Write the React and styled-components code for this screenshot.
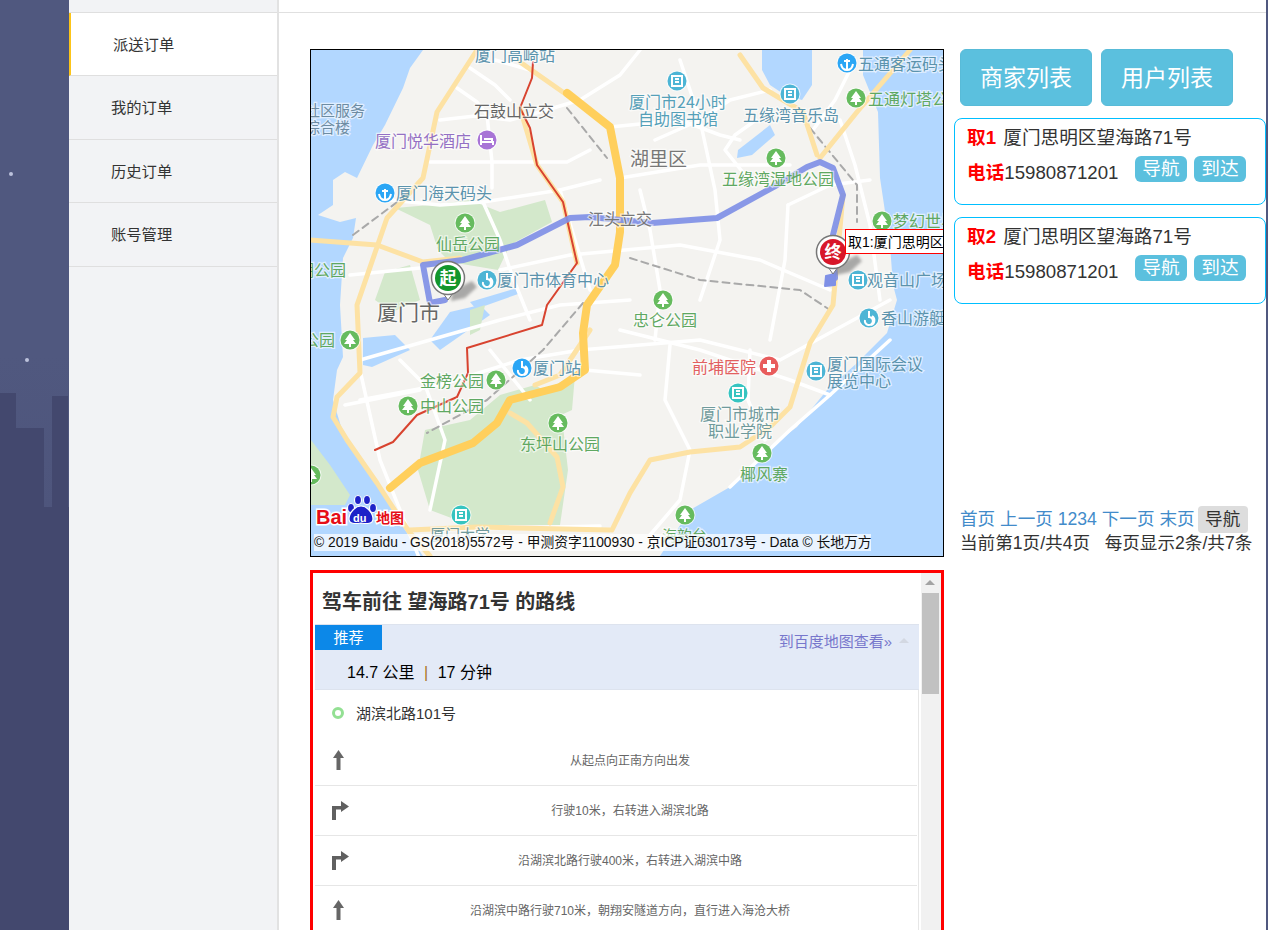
import React from "react"
import styled, { createGlobalStyle } from "styled-components"

const GlobalStyle = createGlobalStyle`
  html, body {
    margin: 0;
    padding: 0;
    height: 930px;
    overflow: hidden;
    background: #fff;
    font-family: "Liberation Sans", "Noto Sans CJK SC", sans-serif;
    color: #333;
  }
  * { box-sizing: border-box; }
`

const Page = styled.div`
  display: flex;
  width: 1268px;
  height: 930px;
  overflow: hidden;
`
const NightColumn = styled.div`
  width: 69px;
  flex: none;
  background: linear-gradient(#50587f 0%, #50587f 38%, #4e557c 55%, #414669 100%);
  & svg { display: block; }
`
const SideNav = styled.nav`
  width: 210px;
  flex: none;
  padding-top: 11.5px;
  background: #f2f3f5;
  border-right: 2px solid #e2e2e2;
`
const NavList = styled.div`
  border-top: 1px solid #dfdfdf;
`
const NavItem = styled.div`
  display: flex;
  align-items: center;
  height: 63.5px;
  font-size: 15.3px;
  color: #333;
  padding: 0 0 2px 42px;
  border-bottom: 1px solid #dfdfdf;
  background: ${p => (p.$active ? "#fff" : "transparent")};
  border-left: ${p => (p.$active ? "2px solid #fcc419" : "0")};
`
const Main = styled.main`
  flex: 1;
  min-width: 0;
  border-right: 2px solid #50587f;
  background: #fff;
`
const TopStrip = styled.div`
  height: 13px;
  border-bottom: 1px solid #e0e0e0;
`
const Content = styled.div`
  display: flex;
  padding: 36px 0 0 31px;
`
const LeftColumn = styled.div`
  width: 634px;
  flex: none;
`
const MapFrame = styled.div`
  width: 634px;
  height: 508px;
  border: 1px solid #000;
  & svg { display: block; }
`
const RoutePanel = styled.section`
  position: relative;
  margin-top: 13px;
  height: 380px;
  border: 3px solid #f00;
  overflow: hidden;
  padding: 0 22px 0 2px;
`
const ScrollTrack = styled.div`
  position: absolute;
  top: 0;
  right: 0;
  bottom: 0;
  width: 21px;
  background: #f1f1f1;
  border-left: 1px solid #fff;
`
const ScrollThumb = styled.div`
  position: absolute;
  top: 20px;
  left: 1px;
  width: 17px;
  height: 101px;
  background: #c1c1c1;
`
const ScrollArrow = styled.div`
  position: absolute;
  top: 7px;
  left: 4px;
  width: 0;
  height: 0;
  border-left: 5px solid transparent;
  border-right: 5px solid transparent;
  border-bottom: 5px solid #a3a3a3;
`
const RouteTitle = styled.h2`
  margin: 0;
  height: 51px;
  padding: 17px 0 0 7px;
  font-size: 20px;
  line-height: 24px;
  font-weight: bold;
  color: #333;
`
const PlanBox = styled.div`
  position: relative;
  height: 66px;
  background: #e3eaf7;
  border-top: 1px solid #dde3ee;
  border-bottom: 1px solid #dde3ee;
`
const PlanHead = styled.div`
  display: flex;
  justify-content: space-between;
  align-items: center;
  height: 25px;
  padding-right: 10px;
`
const PlanTag = styled.span`
  width: 67px;
  height: 25px;
  line-height: 25px;
  text-align: center;
  font-size: 15px;
  color: #fff;
  background: #0c88e8;
`
const MapLink = styled.span`
  display: flex;
  align-items: center;
  gap: 7px;
  margin-top: 6px;
  font-size: 15px;
  color: #7777cc;
`
const LinkCaret = styled.i`
  width: 0;
  height: 0;
  border-left: 5px solid transparent;
  border-right: 5px solid transparent;
  border-bottom: 5px solid #d3d8e2;
`
const PlanStats = styled.div`
  padding: 13px 0 0 32px;
  font-size: 16px;
  line-height: 20px;
  color: #000;
  & b {
    font-weight: normal;
    color: #a8741a;
    margin: 0 5px;
  }
`
const StepList = styled.div`
  border-right: 1px solid #e6e6e6;
`
const StartRow = styled.div`
  display: flex;
  align-items: center;
  height: 46px;
  padding: 0 0 1px 17px;
  font-size: 15px;
  color: #333;
`
const StartDot = styled.i`
  width: 12px;
  height: 12px;
  margin-right: 12px;
  border: 3px solid #93e093;
  border-radius: 50%;
`
const StepRow = styled.div`
  display: grid;
  grid-template-columns: 60px 1fr;
  align-items: center;
  height: 50px;
  padding: 0 32px 2px 0;
  margin-right: 1px;
  font-size: 12px;
  color: #666;
  text-align: center;
  border-bottom: 1px solid #e6e6e6;
  & svg {
    display: block;
    margin: 3px 0 0 16px;
  }
`
const RightColumn = styled.aside`
  width: 312px;
  flex: none;
  margin-left: 10px;
`
const ListButtons = styled.div`
  display: flex;
  gap: 9px;
  padding-left: 6px;
  margin-bottom: 12px;
`
const ListButton = styled.button`
  width: 132px;
  height: 57px;
  padding: 0 0 3px;
  border: 1px solid #58bbd8;
  border-radius: 6px;
  background: #5bc0de;
  color: #fff;
  font: inherit;
  font-size: 23px;
`
const PickupCard = styled.div`
  height: 87px;
  margin-bottom: 12px;
  padding: 6px 19px 0 12px;
  border: 1px solid #00bfff;
  border-radius: 8px;
  font-size: 18.67px;
  color: #333;
`
const CardLine = styled.div`
  height: 25px;
  line-height: 25px;
  white-space: nowrap;
  & > b { margin-right: 2px; }
`
const CardActions = styled.div`
  display: flex;
  align-items: center;
  gap: 7px;
  height: 26px;
  margin-top: 6px;
  white-space: nowrap;
  & > span:first-child { margin-right: auto; padding-top: 3px; }
`
const Key = styled.b`
  color: #f00;
  font-weight: bold;
`
const SmallButton = styled.span`
  width: 52px;
  height: 26px;
  line-height: 25px;
  text-align: center;
  border-radius: 6px;
  background: #5bc0de;
  color: #fff;
  font-size: 18.67px;
`
const Pager = styled.div`
  margin-top: 202px;
  padding-left: 6px;
  font-size: 17.6px;
  color: #333;
`
const PagerLine = styled.div`
  display: flex;
  align-items: center;
  height: ${p => p.$h}px;
  white-space: pre;
`
const PagerLinks = styled.span`
  line-height: 27px;
  color: #428bca;
`
const PagerSummary = styled.span`
  line-height: 23px;
  margin-top: -2px;
`
const GoButton = styled.span`
  width: 50px;
  height: 27px;
  line-height: 27px;
  margin-left: 3px;
  text-align: center;
  border-radius: 4px;
  background: #ddd;
  color: #333;
`

const MapShapes = styled.g`
  filter: blur(0.55px);
`
const MapText = styled.text`
  font-family: "Noto Sans CJK SC", "Liberation Sans", sans-serif;
  font-size: ${p => p.$size || 15.5}px;
  fill: ${p => p.$color};
  stroke: rgba(255, 255, 255, 0.6);
  stroke-width: 2.5px;
  paint-order: stroke;
`
const CopyrightText = styled.text`
  font-family: "Liberation Sans", "Noto Sans CJK SC", sans-serif;
  font-size: 13.8px;
  fill: #111;
`
const TipText = styled.text`
  font-family: "Liberation Sans", "Noto Sans CJK SC", sans-serif;
  font-size: 14px;
  fill: #000;
`
const PinText = styled.text`
  font-family: "Noto Sans CJK SC", sans-serif;
  font-size: 17px;
  font-weight: bold;
  fill: #fff;
  text-anchor: middle;
`
const PinShadow = styled.path`
  fill: #777;
  opacity: 0.6;
  filter: blur(1.5px);
`
const LogoText = styled.text`
  font-family: "Liberation Sans", "Noto Sans CJK SC", sans-serif;
  font-weight: bold;
  fill: ${p => p.$color};
  font-size: ${p => p.$size}px;
  stroke: ${p => p.$halo || "none"};
  stroke-width: 3px;
  paint-order: stroke;
`

const TEAL = "#5b93ad"
const GREEN = "#5fa862"
const labels = [
  ["厦门高崎站", 475, 61, TEAL, 16],
  ["石鼓山立交", 474, 117, "#666", 16],
  ["社区服务", 305, 116, "#6d8ca3", 15],
  ["综合楼", 305, 133, "#6d8ca3", 15],
  ["厦门悦华酒店", 375, 147, "#9470c4", 16],
  ["厦门海天码头", 396, 199, TEAL, 16],
  ["仙岳公园", 436, 250, GREEN, 16],
  ["厦门市体育中心", 497, 286, TEAL, 16],
  ["厦门市", 377, 320, "#666", 21],
  ["湖公园", 298, 276, GREEN, 16],
  ["公园", 303, 346, GREEN, 16],
  ["金榜公园", 420, 387, GREEN, 16],
  ["中山公园", 420, 412, GREEN, 16],
  ["厦门站", 533, 374, TEAL, 16],
  ["东坪山公园", 520, 450, GREEN, 16],
  ["忠仑公园", 633, 326, GREEN, 16],
  ["湖里区", 630, 166, "#777", 19],
  ["厦门市24小时", 629, 108, "#55a0b8", 16],
  ["自助图书馆", 638, 125, "#55a0b8", 16],
  ["五缘湾音乐岛", 743, 121, TEAL, 16],
  ["五缘湾湿地公园", 722, 185, GREEN, 16],
  ["五通客运码头", 858, 70, TEAL, 16],
  ["五通灯塔公园", 868, 105, GREEN, 16],
  ["梦幻世界", 893, 227, GREEN, 16],
  ["观音山广场", 867, 286, TEAL, 16],
  ["香山游艇", 881, 324, TEAL, 16],
  ["前埔医院", 692, 373, "#e26060", 16],
  ["厦门国际会议", 827, 370, TEAL, 16],
  ["展览中心", 827, 387, TEAL, 16],
  ["厦门市城市", 700, 420, "#6f9a9c", 16],
  ["职业学院", 708, 437, "#6f9a9c", 16],
  ["椰风寨", 740, 480, GREEN, 16],
  ["江头立交", 588, 225, "#777", 16],
  ["厦门大学", 430, 540, "#6f9a9c", 15],
  ["海韵台", 662, 541, GREEN, 15],
]

const pois = [
  [487, 140, "#a874d6", "bed"],
  [385, 193, "#2ba6f5", "anchor"],
  [465, 223, "#66bb5e", "tree"],
  [487, 280, "#4db5d5", "swirl"],
  [350, 340, "#66bb5e", "tree"],
  [496, 380, "#66bb5e", "tree"],
  [408, 406, "#66bb5e", "tree"],
  [522, 368, "#2ba6f5", "swirl"],
  [558, 423, "#66bb5e", "tree"],
  [663, 300, "#66bb5e", "tree"],
  [677, 81, "#4db5d5", "house"],
  [790, 94, "#4db5d5", "house"],
  [776, 158, "#66bb5e", "tree"],
  [847, 63, "#2ba6f5", "anchor"],
  [856, 98, "#66bb5e", "tree"],
  [882, 221, "#66bb5e", "tree"],
  [858, 280, "#4db5d5", "house"],
  [869, 318, "#4db5d5", "swirl"],
  [769, 366, "#e85c5c", "cross"],
  [816, 371, "#4db5d5", "house"],
  [738, 393, "#36c4c0", "house"],
  [762, 453, "#66bb5e", "tree"],
  [461, 515, "#36c4c0", "house"],
  [685, 515, "#66bb5e", "tree"],
  [311, 475, "#66bb5e", "tree"],
]

const whiteRoads = [
  "M457 88 477 102 487 115 492 162 492 188",
  "M430 162H533L567 162 590 150",
  "M440 120 475 116 510 120 540 112 580 100",
  "M483 202 500 240 513 278 530 320",
  "M390 200 440 205 483 202 560 190 600 180",
  "M470 68 495 85 510 100",
  "M580 100 620 75 640 50",
  "M610 127 680 120 720 135 740 140",
  "M560 190 575 240 590 290",
  "M620 178 700 165 790 165",
  "M495 60 530 70",
  "M680 60 700 120 715 190 720 240 700 300",
  "M640 190 650 230 660 290 655 340",
  "M655 140 700 120 730 100 770 90",
  "M756 120 735 135 725 150 745 175",
  "M840 120 855 165 870 225 880 300",
  "M788 205 830 185 870 180",
  "M788 205 785 260 770 340",
  "M500 270 570 255 680 245 760 260 830 290",
  "M350 275 420 268",
  "M360 360 430 340 500 320 560 305 630 300",
  "M360 400 440 385 520 360 580 350 700 340 780 360 890 300",
  "M345 405 420 390",
  "M400 360 425 385 445 440 430 510",
  "M360 370 380 460 420 560",
  "M490 350 530 400",
  "M620 330 700 350 790 380 830 395 890 340",
  "M670 345 665 400 690 450 680 500 650 535",
  "M730 487 790 430 830 395",
  "M433 530 600 526",
  "M750 350 748 400 765 440",
  "M585 370 640 375",
  "M813 130 835 100 850 70",
]
const yellowRoads = [
  "M477 50 437 112 423 178 387 218 357 305 360 373 337 397 333 417 347 440 377 483 390 503 410 533 430 556",
  "M310 240 377 245 423 262 460 258",
  "M520 62 567 95",
  "M740 55 763 88 803 112 817 155",
  "M910 50 857 112 820 158",
  "M843 195 833 305 810 343 790 407 770 427 740 447 690 452 650 460 630 493 612 530",
  "M410 530 477 527 610 530",
  "M510 413 527 423 557 457 563 487 550 523",
  "M520 108 537 165 563 202 577 263",
  "M590 330 560 375 535 385",
]

const parks = [
  "M395 208 430 205 470 200 500 212 545 200 552 222 510 245 498 270 450 262 438 250 430 225Z",
  "M385 272 410 265 420 300 392 312 375 300Z",
  "M425 430 470 420 500 395 535 385 560 400 568 470 560 525 470 525 430 510 418 470Z",
  "M545 390 575 375 572 410 550 420Z",
  "M311 440 330 465 350 495 345 505 311 505Z",
  "M470 310 485 305 480 330 470 335Z",
]
const waters = [
  "M423 50 410 68 403 88 385 125 373 145 357 178 345 172 333 180 333 205 318 215 340 222 356 218 353 238 343 258 340 305 343 357 337 370 333 400 343 433 370 470 387 500 403 527 423 556H311V50Z",
  "M762 50 812 50 812 85 802 100 785 95 770 85 762 70Z",
  "M738 150 770 125 775 135 752 155 737 158Z",
  "M863 50 863 75 878 112 880 178 890 245 893 285 897 300 887 333 857 363 827 390 797 427 770 447 730 487 690 510 660 556H943V50Z",
  "M363 338 395 335 410 350 372 367 363 365Z",
  "M450 312 480 305 490 315 440 350 430 340Z",
  "M470 302 517 288 518 294 476 309Z",
]

function PoiGlyph({ x, y, kind }) {
  const w = "#fff"
  if (kind === "tree") return <path d={`M${x} ${y - 7}l5 7h-2l3 4h-5v3h-2v-3h-5l3-4h-2z`} fill={w} />
  if (kind === "cross") return <path d={`M${x - 2} ${y - 6}h4v4h4v4h-4v4h-4v-4h-4v-4h4z`} fill={w} />
  if (kind === "anchor") return <path d={`M${x} ${y - 4}v11M${x - 6} ${y + 1}q1 6 6 6q5 0 6-6M${x - 3} ${y - 2}h6`} stroke={w} strokeWidth="2" fill="none" />
  if (kind === "swirl") return <path d={`M${x} ${y - 7}v6a4 4 0 1 1-4 3M${x + 3} ${y - 2}a5 5 0 0 1-1 9`} stroke={w} strokeWidth="2" fill="none" />
  if (kind === "bed") return <path d={`M${x - 6} ${y - 5}v10M${x - 6} ${y + 2}h12v3M${x - 3} ${y - 1}h8v3`} stroke={w} strokeWidth="2" fill="none" />
  return <path d={`M${x - 5} ${y - 5}h10v10h-10zM${x - 2} ${y - 2}h4M${x - 2} ${y + 1}h4`} stroke={w} strokeWidth="2" fill="none" />
}

function Pin({ x, y, color, label }) {
  return (
    <g>
      <PinShadow d={`M${x + 4} ${y + 13}l20-10 5 6-12 11-14 3z`} />
      <path d={`M${x} ${y + 22}l-5-7h10z`} fill="#fff" stroke="#777" strokeWidth="1" />
      <circle cx={x} cy={y} r="16.5" fill="#fff" stroke="#777" strokeWidth="1.5" />
      <circle cx={x} cy={y} r="13" fill={color} />
      <PinText x={x} y={y + 6}>{label}</PinText>
    </g>
  )
}

function BaiduMap() {
  return (
    <svg width="632" height="506" viewBox="311 50 632 506">
      <defs>
        <clipPath id="tipClip"><rect x="845" y="229" width="98" height="25" /></clipPath>
      </defs>
      <rect x="311" y="50" width="632" height="506" fill="#f4f3f0" />
      <MapShapes>
        {waters.map(d => <path key={d} d={d} fill="#b2d7ff" />)}
        {parks.map(d => <path key={d} d={d} fill="#d3e8cb" />)}
        <g fill="none" strokeLinejoin="round" strokeLinecap="round">
          {whiteRoads.map(d => <path key={d} d={d} stroke="#fff" strokeWidth="3.5" />)}
          <path d="M567 108 607 158M583 303 543 350 487 400 427 433M353 235 400 200M630 258 700 280 800 290 830 310M810 128 857 185 857 222" stroke="#a9a9a9" strokeWidth="2" strokeDasharray="7 5" />
          {yellowRoads.map(d => <path key={d} d={d} stroke="#fde2a4" strokeWidth="5" />)}
          <path d="M567 93 610 127 620 178 620 232 615 265 587 305 583 333 585 370 560 387 510 400 497 423 473 443 420 463 390 488" stroke="#ffcf5c" strokeWidth="8" />
          <path d="M533 62 532 78 520 108 530 128 537 165 563 202 577 263 547 305 542 325 467 348 468 373 457 397 417 415 393 442 375 450" stroke="#d8432f" strokeWidth="2" />
          <path d="M445 300 430 303 423 265 463 260 517 245 570 218 590 217 652 223 717 218 777 185 807 167 820 162 833 168 843 195 833 235 835 278" stroke="#7f90e6" strokeWidth="6" opacity="0.92" />
          <path d="M826 276 835 274 835 285 825 286Z" fill="#7f90e6" stroke="#7f90e6" strokeWidth="2" />
        </g>
      </MapShapes>
      {labels.map(([text, x, y, color, size]) => (
        <MapText key={text + x} x={x} y={y} $color={color} $size={size}>{text}</MapText>
      ))}
      {pois.map(([x, y, color, kind]) => (
        <g key={`${x}-${y}`}>
          <circle cx={x} cy={y} r="10.5" fill="#fff" opacity="0.7" />
          <circle cx={x} cy={y} r="9.5" fill={color} />
          <PoiGlyph x={x} y={y} kind={kind} />
        </g>
      ))}
      <Pin x={448} y={278} color="#13962c" label="起" />
      <Pin x={833} y={252} color="#d8172a" label="终" />
      <g clipPath="url(#tipClip)">
        <rect x="845.5" y="229.5" width="110" height="24" fill="#fff" stroke="#f00" />
        <TipText x="848" y="247">取1:厦门思明区望海路</TipText>
      </g>
      <LogoText x="316" y="524" $size="20" $color="#e60d17" $halo="#fff">Bai</LogoText>
      <g fill="#1e22c8" stroke="#fff" strokeWidth="1.2">
        <ellipse cx="351" cy="508" rx="3.5" ry="4.5" />
        <ellipse cx="358" cy="500" rx="3.5" ry="4.5" />
        <ellipse cx="367" cy="500" rx="3.5" ry="4.5" />
        <ellipse cx="373" cy="508" rx="3.5" ry="4.5" />
        <path d="M361 506c-6 0-12 7-12 13 0 5 6 5 12 4 6 1 12 1 12-4 0-6-6-13-12-13z" />
      </g>
      <LogoText x="353" y="522" $size="11" $color="#fff">du</LogoText>
      <LogoText x="376" y="523" $size="14" $color="#e60d17" $halo="#fff">地图</LogoText>
      <rect x="314" y="534" width="557" height="17" fill="#fff" opacity="0.72" />
      <CopyrightText x="314" y="547">© 2019 Baidu - GS(2018)5572号 - 甲测资字1100930 - 京ICP证030173号 - Data © 长地万方</CopyrightText>
    </svg>
  )
}

const UpArrow = () => (
  <svg width="20" height="22" viewBox="0 0 20 22" fill="#666">
    <path d="M2 8 7.500 0 13 8H9.500V20H5.500V8Z" />
  </svg>
)
const TurnArrow = () => (
  <svg width="20" height="22" viewBox="0 0 20 22" fill="#606060">
    <path d="M1 20V6H10V1L18 6.500 10 12V9.500H5V20Z" />
  </svg>
)

const steps = [
  [UpArrow, "从起点向正南方向出发"],
  [TurnArrow, "行驶10米，右转进入湖滨北路"],
  [TurnArrow, "沿湖滨北路行驶400米，右转进入湖滨中路"],
  [UpArrow, "沿湖滨中路行驶710米，朝翔安隧道方向，直行进入海沧大桥"],
]

function Pickup({ no }) {
  return (
    <PickupCard>
      <CardLine><Key>取{no}</Key> 厦门思明区望海路71号</CardLine>
      <CardActions>
        <span><Key>电话</Key>15980871201</span>
        <SmallButton>导航</SmallButton>
        <SmallButton>到达</SmallButton>
      </CardActions>
    </PickupCard>
  )
}

export default function App() {
  return (
    <Page>
      <GlobalStyle />
      <NightColumn>
        <svg width="69" height="930" viewBox="0 0 69 930">
          <path d="M0 393H16V428H44V507H52V396H68V507H69V930H0Z" fill="#43486e" />
          <circle cx="11" cy="174" r="2" fill="#bcc2dc" />
          <circle cx="27" cy="360" r="2" fill="#bcc2dc" />
        </svg>
      </NightColumn>
      <SideNav>
        <NavList>
          <NavItem $active>派送订单</NavItem>
          <NavItem>我的订单</NavItem>
          <NavItem>历史订单</NavItem>
          <NavItem>账号管理</NavItem>
        </NavList>
      </SideNav>
      <Main>
        <TopStrip />
        <Content>
          <LeftColumn>
            <MapFrame><BaiduMap /></MapFrame>
            <RoutePanel>
              <RouteTitle>驾车前往 望海路71号 的路线</RouteTitle>
              <PlanBox>
                <PlanHead>
                  <PlanTag>推荐</PlanTag>
                  <MapLink>到百度地图查看»<LinkCaret /></MapLink>
                </PlanHead>
                <PlanStats>14.7 公里<b> | </b>17 分钟</PlanStats>
              </PlanBox>
              <StepList>
                <StartRow><StartDot />湖滨北路101号</StartRow>
                {steps.map(([Icon, text]) => (
                  <StepRow key={text}><Icon /><span>{text}</span></StepRow>
                ))}
              </StepList>
              <ScrollTrack>
                <ScrollArrow />
                <ScrollThumb />
              </ScrollTrack>
            </RoutePanel>
          </LeftColumn>
          <RightColumn>
            <ListButtons>
              <ListButton>商家列表</ListButton>
              <ListButton>用户列表</ListButton>
            </ListButtons>
            <Pickup no={1} />
            <Pickup no={2} />
            <Pager>
              <PagerLine $h={27}>
                <PagerLinks>首页 上一页 1234 下一页 末页</PagerLinks>
                <GoButton>导航</GoButton>
              </PagerLine>
              <PagerLine $h={23}>
                <PagerSummary>当前第1页/共4页   每页显示2条/共7条</PagerSummary>
              </PagerLine>
            </Pager>
          </RightColumn>
        </Content>
      </Main>
    </Page>
  )
}
